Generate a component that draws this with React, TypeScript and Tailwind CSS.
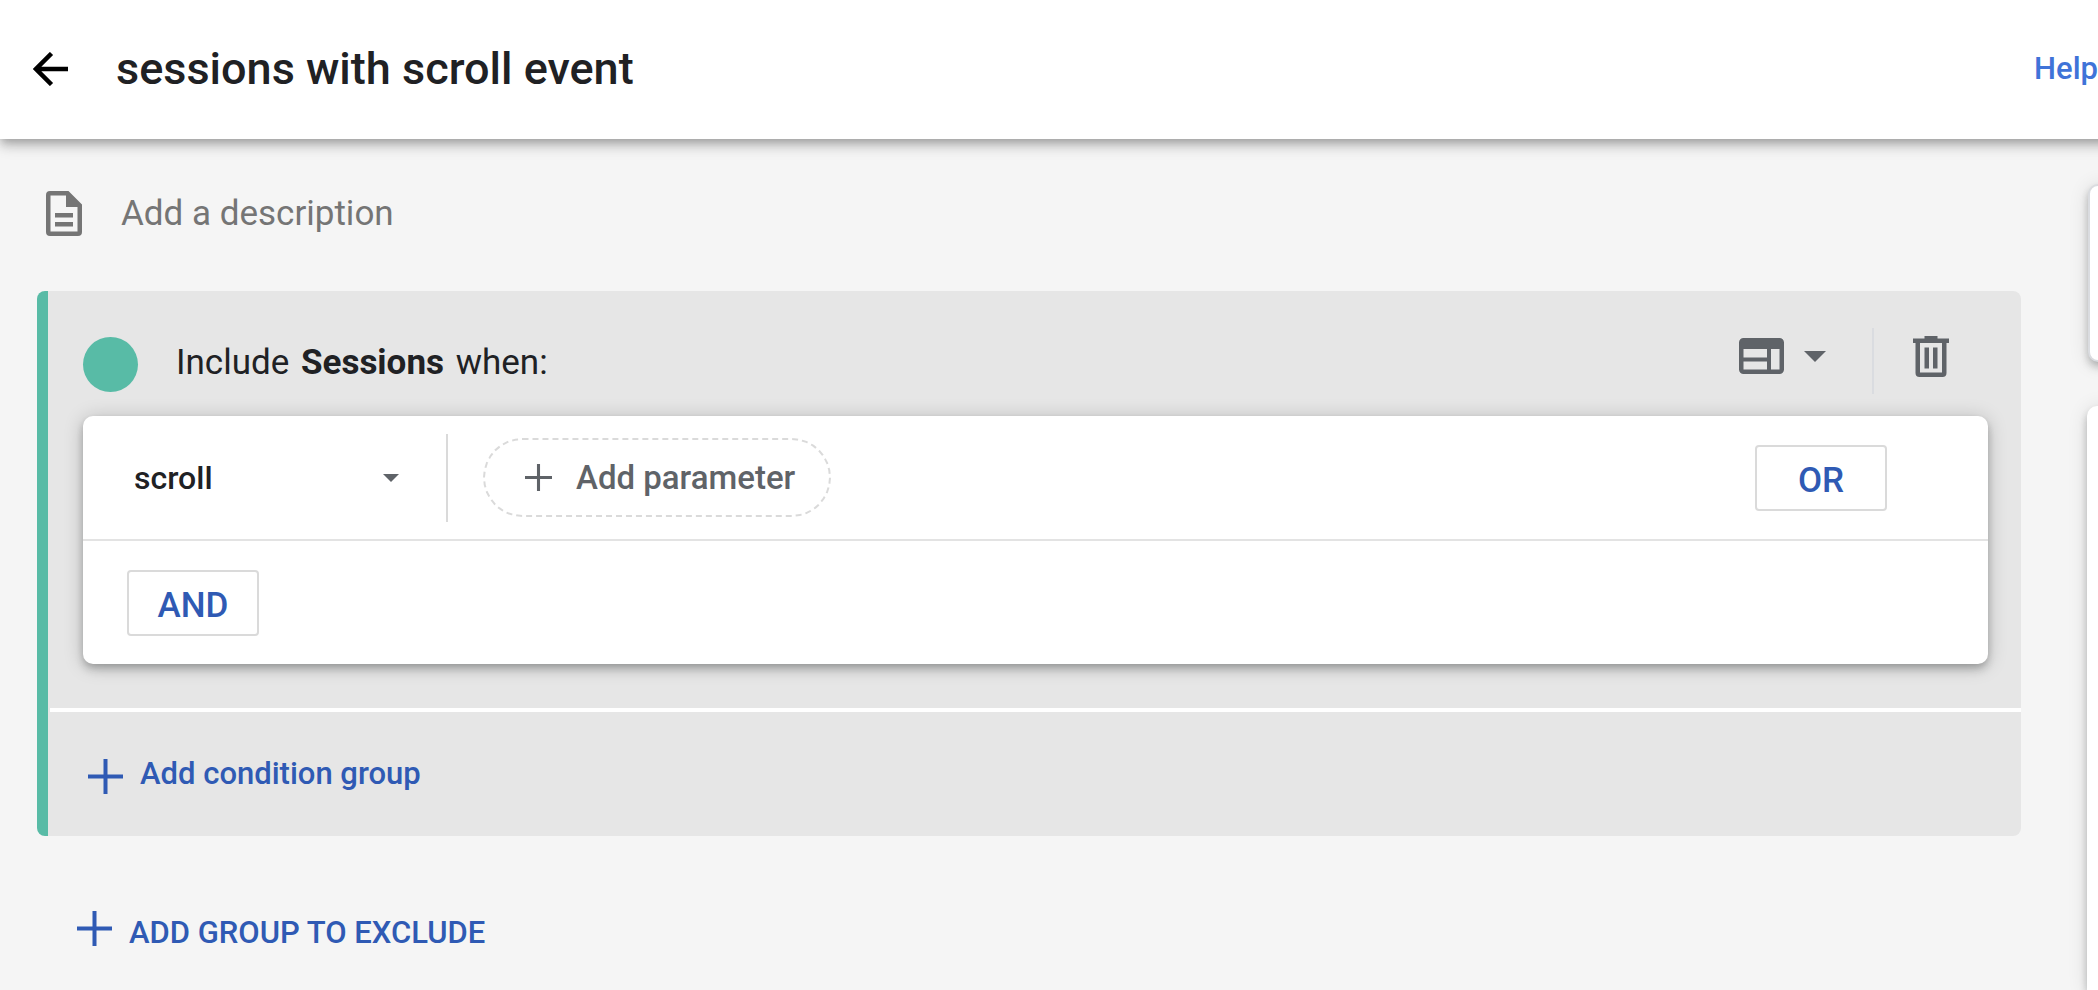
import { useState } from "react";

type IconProps = {
  className?: string;
};

function PlusIcon({ className }: IconProps) {
  return (
    <svg viewBox="0 0 35 35" fill="currentColor" className={className} aria-hidden="true">
      <path d="M15.500 0h4v15.500H35v4H19.500V35h-4V19.500H0v-4h15.500z" />
    </svg>
  );
}

function CaretIcon({ className }: IconProps) {
  return (
    <svg viewBox="0 0 22 11" fill="currentColor" className={className} aria-hidden="true">
      <path d="M0 0h22L11 11z" />
    </svg>
  );
}

function BackIcon() {
  return (
    <svg viewBox="0 0 35 34" className="h-[34px] w-[35px]" fill="none" aria-hidden="true">
      <path d="M18.500 1.500 3 17l15.500 15.500M3 17h32" stroke="#000" strokeWidth="4.500" />
    </svg>
  );
}

function DescriptionIcon() {
  return (
    <svg viewBox="0 0 36 45" className="h-[45px] w-9 shrink-0 text-[#757575]" aria-hidden="true">
      <path
        fill="currentColor"
        fillRule="evenodd"
        d="M4 0h18.500L36 13.500V41a4 4 0 0 1-4 4H4a4 4 0 0 1-4-4V4a4 4 0 0 1 4-4zm.5 4.500v36h27V16H20V4.500z"
      />
      <path fill="currentColor" d="M9 22h18v4.500H9zM9 31h18v4.500H9z" />
    </svg>
  );
}

function ScopeIcon() {
  return (
    <svg viewBox="0 0 45 36" className="h-9 w-[45px]" fill="currentColor" aria-hidden="true">
      <path
        fillRule="evenodd"
        d="M4.500 0h36A4.500 4.500 0 0 1 45 4.500v27a4.500 4.500 0 0 1-4.500 4.500h-36A4.500 4.500 0 0 1 0 31.500v-27A4.500 4.500 0 0 1 4.500 0zm0 11v8.500h23.500V11zm0 12.500v8h23.500v-8zM32 11v20.500h8.500V11z"
      />
    </svg>
  );
}

function TrashIcon() {
  return (
    <svg viewBox="0 0 36 41" className="h-[41px] w-9" fill="currentColor" aria-hidden="true">
      <path
        fillRule="evenodd"
        d="M11.500 0h13v2.500H36V7h-2.500v30a4 4 0 0 1-4 4h-23a4 4 0 0 1-4-4V7H0V2.500h11.500zM7 7v29.500h22V7z"
      />
      <path d="M11.500 11.500H16v21h-4.500zM20 11.500h4.500v21H20z" />
    </svg>
  );
}

export default function App() {
  const [description, setDescription] = useState("");
  const [event, setEvent] = useState("scroll");

  return (
    <div className="flex min-h-screen flex-col overflow-hidden bg-[#f5f5f5] font-[Roboto,sans-serif] text-[#202124]">
      {/* runs past the right edge so its shadow does not fade out there */}
      <header className="relative -mr-6 flex h-[139px] items-center bg-white pr-6 pb-px pl-[33px] shadow-[0_4px_8px_-2px_rgba(0,0,0,0.2),0_8px_10px_rgba(0,0,0,0.14),0_2px_20px_rgba(0,0,0,0.12)]">
        <button type="button" aria-label="Back">
          <BackIcon />
        </button>
        <h1 className="ml-12 text-[45px] leading-[52px] font-medium">
          sessions with scroll event
        </h1>
        <a href="#help" className="ml-auto text-[31px] leading-10 font-medium text-[#3f73d8]">
          Help
        </a>
      </header>

      <div className="flex flex-1">
        <main className="min-w-0 flex-1 pr-[66px] pl-[37px]">
          <label className="flex h-[152px] items-center gap-[39px] pb-[3px] pl-[9px]">
            <DescriptionIcon />
            <input
              type="text"
              aria-label="Description"
              placeholder="Add a description"
              value={description}
              onChange={(e) => setDescription(e.target.value)}
              className="flex-1 bg-transparent text-[35px] leading-10 outline-none placeholder:text-[#757575]"
            />
          </label>

          <section className="overflow-hidden rounded-lg border-l-[11px] border-[#58bba6] bg-[#e6e6e6]">
            <div className="pt-9 pr-[33px] pb-11 pl-[35px]">
              <div className="flex h-[68px] items-center">
                <span className="mt-1.5 size-[55px] rounded-full bg-[#58bba6]" />
                <h2 className="ml-[38px] pt-1 text-[35px] leading-10">
                  Include <b className="mx-[3px]">Sessions</b> when:
                </h2>
                <div className="mr-[39px] ml-auto flex h-full items-center text-[#5f6368]">
                  <button
                    type="button"
                    aria-label="Scope"
                    className="flex items-center gap-5 pb-2.5"
                  >
                    <ScopeIcon />
                    <CaretIcon className="h-[11px] w-[22px]" />
                  </button>
                  <span className="mr-[39px] ml-[46px] h-[66px] w-0.5 bg-[#dadce0]" />
                  <button type="button" aria-label="Delete group" className="pb-2.5">
                    <TrashIcon />
                  </button>
                </div>
              </div>

              <div className="mt-[21px] rounded-[10px] bg-white shadow-[0_4px_8px_-2px_rgba(0,0,0,0.2),0_6px_8px_rgba(60,64,67,0.14),0_2px_20px_rgba(0,0,0,0.2)]">
                <div className="flex h-[125px] items-center border-b-2 border-[#e3e3e3]">
                  <div className="relative flex h-[88px] w-[365px] items-center border-r-2 border-[#dadada]">
                    <select
                      aria-label="Event"
                      value={event}
                      onChange={(e) => setEvent(e.target.value)}
                      className="h-full w-full appearance-none bg-transparent pl-[51px] text-[32px] font-medium outline-none"
                    >
                      <option value="scroll">scroll</option>
                    </select>
                    <CaretIcon className="pointer-events-none absolute right-[47px] h-2 w-4 text-[#5f6368]" />
                  </div>
                  <button
                    type="button"
                    className="ml-[35px] flex h-[79px] items-center gap-6 rounded-full border-2 border-dashed border-[#dadada] pr-[34px] pl-10 text-[33px] leading-10 font-medium text-[#5f6368]"
                  >
                    <PlusIcon className="size-[27px]" />
                    Add parameter
                  </button>
                  <button
                    type="button"
                    className="mr-[101px] ml-auto h-[66px] w-[132px] rounded-[4px] border-2 border-[#dadada] pt-1.5 text-[35px] leading-10 font-medium text-[#2f5ab4]"
                  >
                    OR
                  </button>
                </div>
                <div className="flex h-[123px] items-center pl-11">
                  <button
                    type="button"
                    className="h-[66px] w-[132px] rounded-[4px] border-2 border-[#dadada] pt-1.5 text-[35px] leading-10 font-medium text-[#2f5ab4]"
                  >
                    AND
                  </button>
                </div>
              </div>
            </div>

            <div className="ml-0.5 flex h-32 items-center border-t-4 border-white pl-[38px]">
              <button
                type="button"
                className="flex items-end gap-[17px] text-[31px] leading-10 font-medium text-[#2f5ab4]"
              >
                <PlusIcon className="size-[35px]" />
                Add condition group
              </button>
            </div>
          </section>

          <button
            type="button"
            className="mt-[75px] ml-10 flex items-start gap-[17px] text-[31px] leading-[44px] font-medium text-[#2f5ab4]"
          >
            <PlusIcon className="size-[35px]" />
            ADD GROUP TO EXCLUDE
          </button>
        </main>

        {/* side panels, mostly past the right edge of the window */}
        <aside className="-mr-6 flex w-[35px] flex-col gap-11 pt-[45px]">
          <div className="ml-px h-[178px] rounded-[10px] border-2 border-[#dadce0] bg-white shadow-[0_4px_8px_-2px_rgba(0,0,0,0.2),0_6px_8px_rgba(60,64,67,0.14),0_2px_20px_rgba(0,0,0,0.12)]" />
          <div className="flex-1 rounded-t-[10px] bg-white shadow-[0_4px_8px_-2px_rgba(0,0,0,0.2),0_6px_8px_rgba(60,64,67,0.14),0_2px_20px_rgba(0,0,0,0.12)]" />
        </aside>
      </div>
    </div>
  );
}
